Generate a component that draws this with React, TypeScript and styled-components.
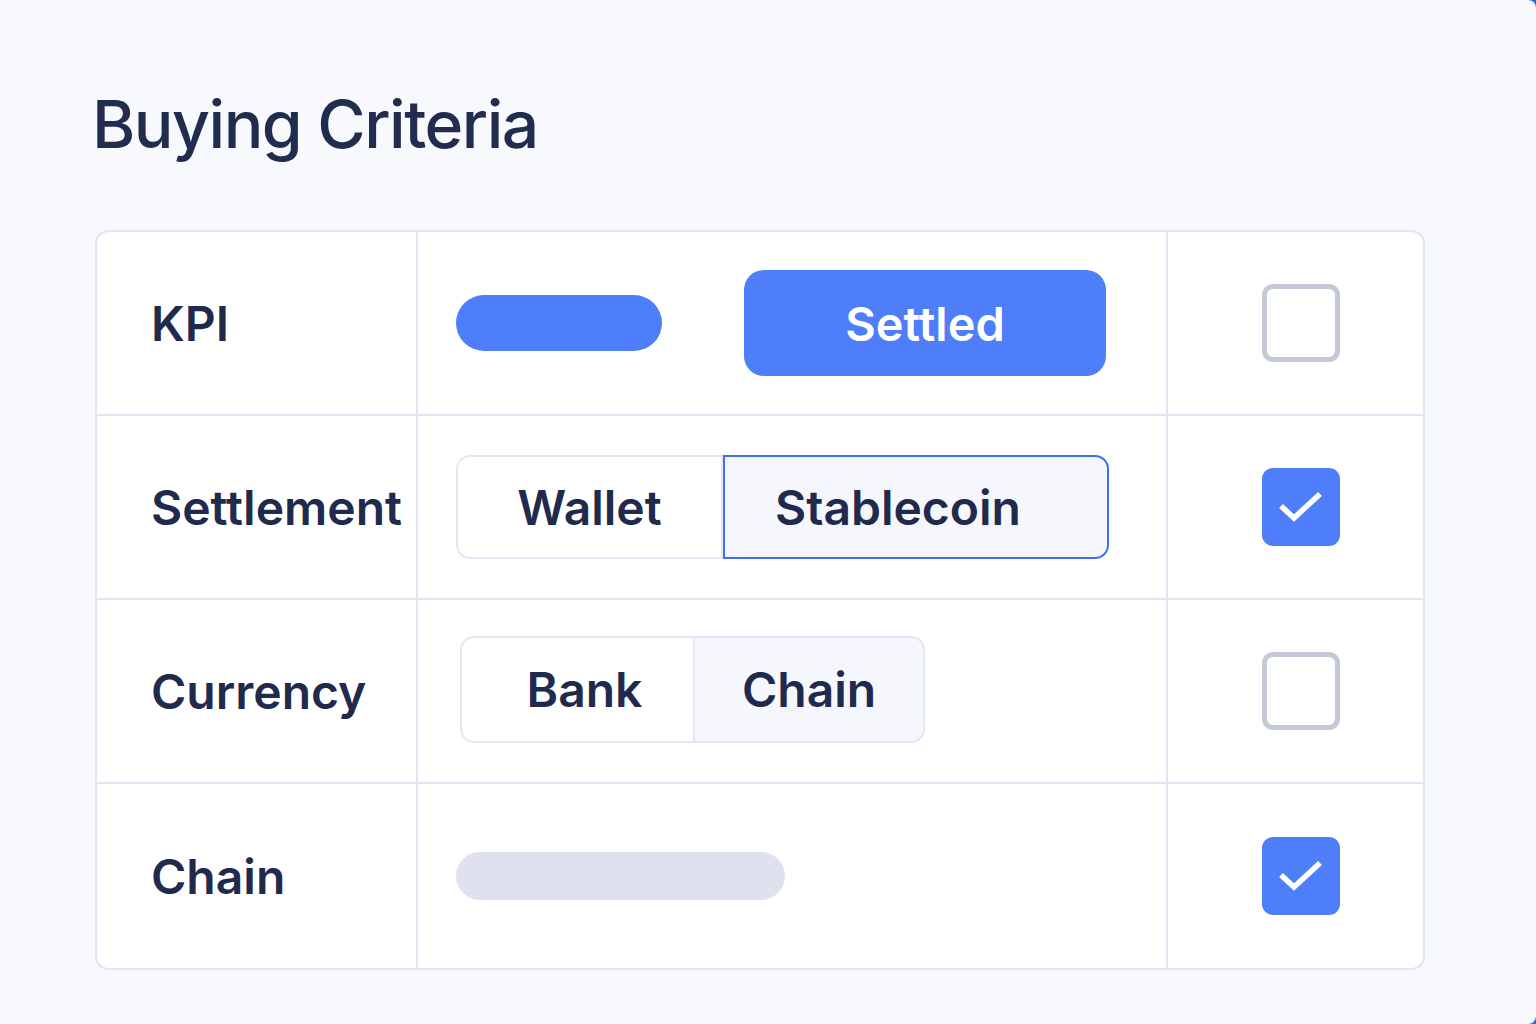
import React from "react";
import styled, { createGlobalStyle } from "styled-components";

const GlobalStyle = createGlobalStyle`
  html, body {
    margin: 0;
    padding: 0;
    background: #2f63f0;
  }
  body {
    font-family: Inter, "Noto Sans", "Liberation Sans", sans-serif;
    color: #1f2a4d;
  }
`;

const Page = styled.div`
  width: 1536px;
  height: 1024px;
  box-sizing: border-box;
  background: #f8f9fd;
  border-radius: 0 8px 8px 0;
  padding: 84px 111px 0 95px;
`;

const Title = styled.h1`
  margin: 0 0 66px -3px;
  font-size: 66px;
  line-height: 80px;
  font-weight: 500;
  letter-spacing: -1.5px;
  color: #222c4e;
`;

const Table = styled.div`
  display: grid;
  grid-template-columns: 321px 750px 1fr;
  grid-auto-rows: 184px;
  background: #fff;
  border: 2px solid #dfe5f2;
  border-radius: 14px;
  overflow: hidden;
`;

const Cell = styled.div<{ $last?: boolean; $bottom?: boolean; $center?: boolean }>`
  display: flex;
  align-items: center;
  justify-content: ${({ $center }) => ($center ? "center" : "flex-start")};
  border-right: ${({ $last }) => ($last ? "none" : "2px solid #dfe5f2")};
  border-bottom: ${({ $bottom }) => ($bottom ? "none" : "2px solid #dfe5f2")};
  padding-left: ${({ $center }) => ($center ? "10px" : "38px")};
`;

const Label = styled.span`
  padding-left: 16px;
  font-size: 48px;
  font-weight: 600;
  color: #1f2a4d;
`;

const Pill = styled.div<{ $width: number; $height: number; $color: string }>`
  width: ${({ $width }) => $width}px;
  height: ${({ $height }) => $height}px;
  border-radius: ${({ $height }) => $height / 2}px;
  background: ${({ $color }) => $color};
`;

const PrimaryButton = styled.button`
  margin-left: 82px;
  width: 362px;
  height: 106px;
  border: none;
  border-radius: 20px;
  background: #4e7ef9;
  color: #fff;
  font-family: inherit;
  font-size: 47px;
  font-weight: 600;
`;

const Segmented = styled.div<{ $shift?: number }>`
  display: flex;
  margin-left: ${({ $shift }) => $shift ?? 0}px;
  margin-top: ${({ $shift }) => ($shift ? "-4px" : "0")};
`;

const Segment = styled.div<{
  $width: number;
  $height: number;
  $active?: boolean;
  $tint?: boolean;
  $pos: "left" | "right";
  $nudge?: number;
}>`
  box-sizing: border-box;
  width: ${({ $width }) => $width}px;
  height: ${({ $height }) => $height}px;
  display: flex;
  align-items: center;
  justify-content: center;
  padding-left: ${({ $nudge }) => ($nudge && $nudge > 0 ? $nudge : 0)}px;
  padding-right: ${({ $nudge }) => ($nudge && $nudge < 0 ? -$nudge : 0)}px;
  font-size: 48px;
  font-weight: 600;
  color: #1f2a4d;
  background: ${({ $tint, $active }) => ($tint || $active ? "#f5f7fc" : "#fff")};
  border: 2px solid ${({ $active }) => ($active ? "#3d6ff5" : "#e2e8f5")};
  border-left-width: ${({ $pos, $active }) => ($pos === "right" && !$active ? "0" : "2px")};
  border-radius: ${({ $pos }) => ($pos === "left" ? "14px 0 0 14px" : "0 14px 14px 0")};
`;

const Checkbox = styled.div<{ $checked?: boolean }>`
  box-sizing: border-box;
  width: 78px;
  height: 78px;
  border-radius: 11px;
  display: flex;
  align-items: center;
  justify-content: center;
  background: ${({ $checked }) => ($checked ? "#4e7ef9" : "#fff")};
  border: ${({ $checked }) => ($checked ? "none" : "5px solid #c3c9d8")};
`;

const Check = () => (
  <svg width="52" height="52" viewBox="0 0 52 52">
    <path d="M6 25 L19 37 L45 13" fill="none" stroke="#fff" strokeWidth="5.5" />
  </svg>
);

export default function App() {
  return (
    <>
      <GlobalStyle />
      <Page>
        <Title>Buying Criteria</Title>
        <Table>
          <Cell>
            <Label>KPI</Label>
          </Cell>
          <Cell>
            <Pill $width={206} $height={56} $color="#4e7ef9" />
            <PrimaryButton>Settled</PrimaryButton>
          </Cell>
          <Cell $last $center>
            <Checkbox />
          </Cell>

          <Cell>
            <Label>Settlement</Label>
          </Cell>
          <Cell>
            <Segmented>
              <Segment $pos="left" $width={267} $height={104}>
                Wallet
              </Segment>
              <Segment $pos="right" $active $width={386} $height={104} $nudge={-36}>
                Stablecoin
              </Segment>
            </Segmented>
          </Cell>
          <Cell $last $center>
            <Checkbox $checked>
              <Check />
            </Checkbox>
          </Cell>

          <Cell>
            <Label>Currency</Label>
          </Cell>
          <Cell>
            <Segmented $shift={4}>
              <Segment $pos="left" $width={235} $height={107} $nudge={14}>
                Bank
              </Segment>
              <Segment $pos="right" $tint $width={230} $height={107}>
                Chain
              </Segment>
            </Segmented>
          </Cell>
          <Cell $last $center>
            <Checkbox />
          </Cell>

          <Cell $bottom>
            <Label>Chain</Label>
          </Cell>
          <Cell $bottom>
            <Pill $width={329} $height={48} $color="#dfe2ee" />
          </Cell>
          <Cell $last $bottom $center>
            <Checkbox $checked>
              <Check />
            </Checkbox>
          </Cell>
        </Table>
      </Page>
    </>
  );
}
